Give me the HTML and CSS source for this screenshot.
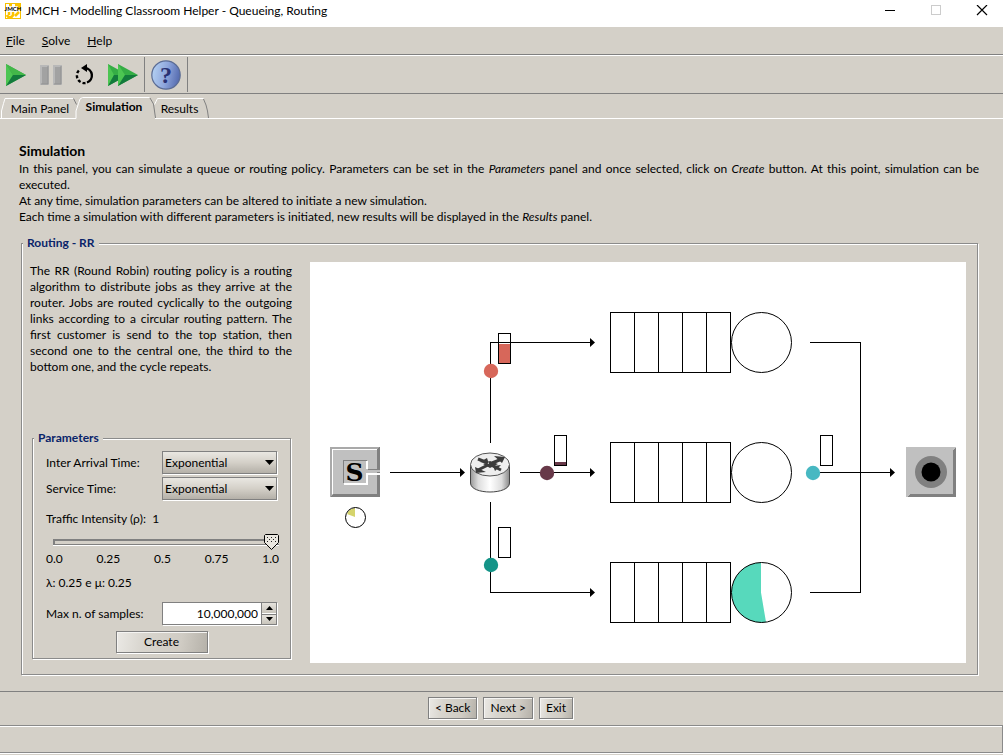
FILE: index.html
```html
<!DOCTYPE html>
<html lang="en">
<head>
<meta charset="utf-8">
<title>JMCH - Modelling Classroom Helper - Queueing, Routing</title>
<link rel="stylesheet" href="styles.css">
</head>
<body>
<header class="titlebar">
  <svg class="app-icon" width="16" height="16" viewBox="0 0 16 16" aria-hidden="true">
    <rect x="0.500" y="0.500" width="15" height="15" fill="#fff" stroke="#f5c000"/>
    <path d="M4 2h3M10 2h4v5M2 12c1 3 5 3 6 0V9M10 13l4-4M4 9v3" fill="none" stroke="#fdc400" stroke-width="2.500"/>
    <text x="8" y="8" text-anchor="middle" class="app-icon-text">JMCH</text>
  </svg>
  <span class="title">JMCH - Modelling Classroom Helper - Queueing, Routing</span>
  <div class="window-buttons">
    <button type="button" aria-label="Minimize"><svg width="12" height="12" viewBox="0 0 12 12"><path d="M1 5.500h10" stroke="#000"/></svg></button>
    <button type="button" aria-label="Maximize" disabled><svg width="12" height="12" viewBox="0 0 12 12"><rect x="1.500" y="0.500" width="9" height="9" fill="none" stroke="#ccc"/></svg></button>
    <button type="button" aria-label="Close"><svg width="12" height="12" viewBox="0 0 12 12"><path d="M1 0l10 10M11 0L1 10" stroke="#000" stroke-width="1.200"/></svg></button>
  </div>
</header>

<nav class="menubar" aria-label="Menu">
  <button type="button"><u>F</u>ile</button>
  <button type="button"><u>S</u>olve</button>
  <button type="button"><u>H</u>elp</button>
</nav>

<div class="toolbar" role="toolbar" aria-label="Simulation controls">
  <button type="button" aria-label="Start">
    <svg width="20" height="24" viewBox="0 0 20 24"><path d="M0 1L20 12L0 23z" fill="#35ad45"/><path d="M0 1L7 12L0 23z" fill="#4cc552"/><path d="M0 1L20 12H7z" fill="#43b749"/><path d="M0 23L20 12H7z" fill="#137a3c"/></svg>
  </button>
  <button type="button" aria-label="Pause" disabled>
    <svg width="22" height="20" viewBox="0 0 22 20"><path d="M0 0h9v20H0zM13 0h9v20h-9z" fill="#b8b8b8"/><path d="M2 2h6v17H2zM15 2h6v17h-6z" fill="#a2a2a2"/><path d="M8 1v18H1M21 1v18h-7" fill="none" stroke="#929292"/></svg>
  </button>
  <button type="button" aria-label="Restart">
    <svg width="20" height="22" viewBox="0 0 20 22"><path d="M10 4A7.500 7.500 0 0 1 12 18.500" fill="none" stroke="#000" stroke-width="2.400"/><path d="M10.500 19A7.500 7.500 0 0 1 5 5.500" fill="none" stroke="#000" stroke-width="2.400" stroke-dasharray="3 2"/><path d="M12 0v8L6 4z"/></svg>
  </button>
  <button type="button" aria-label="Fast forward">
    <svg width="30" height="24" viewBox="0 0 30 24"><path d="M0 1L20 12L0 23z" fill="#35ad45"/><path d="M0 1L6 12L0 23z" fill="#4cc552"/><path d="M0 23L20 12H6z" fill="#137a3c"/><path d="M10 1L30 12L10 23z" fill="#35ad45"/><path d="M10 1L17 12L10 23z" fill="#4cc552"/><path d="M10 23L30 12H17z" fill="#137a3c"/></svg>
  </button>
  <span class="tool-separator"></span>
  <button type="button" aria-label="Help">
    <svg width="30" height="30" viewBox="0 0 30 30">
      <defs><linearGradient id="helpFill" x1="0" y1="0.400" x2="1" y2="0.600"><stop offset="0" stop-color="#b3d0f2"/><stop offset="0.500" stop-color="#8ea6dc"/><stop offset="1" stop-color="#5268ad"/></linearGradient></defs>
      <circle cx="15" cy="15" r="14.200" fill="url(#helpFill)" stroke="#5b6c94" stroke-width="1.200"/>
      <text x="15" y="23" text-anchor="middle" class="help-mark">?</text>
    </svg>
  </button>
  <span class="tool-separator"></span>
</div>

<div class="tabs" role="tablist">
  <svg class="tab-edges" width="212" height="25" viewBox="0 0 212 25" aria-hidden="true">
    <g fill="none" stroke-width="1">
      <path d="M1.500 24V17L3.500 9.500L5 4.500H73.500" stroke="#fff"/>
      <path d="M73.500 4.500L76.500 10.500" stroke="#808080"/>
      <path d="M76 24.500V17L78.500 9.500L80 5L82.500 3.500H149.500" stroke="#fff"/>
      <path d="M150 4L153.500 10L154.500 17L155.500 24" stroke="#808080"/>
      <path d="M154.500 10.500L157.500 4.500H203.500" stroke="#fff"/>
      <path d="M203.500 5L206 11L207.500 17L208.500 24" stroke="#808080"/>
    </g>
  </svg>
  <button type="button" role="tab" class="tab tab-main">Main Panel</button>
  <button type="button" role="tab" class="tab tab-current" aria-selected="true">Simulation</button>
  <button type="button" role="tab" class="tab tab-results">Results</button>
  <span class="tab-line"></span>
</div>

<main class="panel">
  <h1>Simulation</h1>
  <div class="intro">
    <p>In this panel, you can simulate a queue or routing policy. Parameters can be set in the <i>Parameters</i> panel and once selected, click on <i>Create</i> button. At this point, simulation can be executed.</p>
    <p>At any time, simulation parameters can be altered to initiate a new simulation.</p>
    <p>Each time a simulation with different parameters is initiated, new results will be displayed in the <i>Results</i> panel.</p>
  </div>

  <fieldset class="group routing">
    <legend>Routing - RR</legend>
    <div class="routing-body">
      <div class="side">
        <p class="description">The RR (Round Robin) routing policy is a routing algorithm to distribute jobs as they arrive at the router. Jobs are routed cyclically to the outgoing links according to a circular routing pattern. The first customer is send to the top station, then second one to the central one, the third to the bottom one, and the cycle repeats.</p>
        <fieldset class="group params">
          <legend>Parameters</legend>
          <div class="form">
            <label for="arrival">Inter Arrival Time:</label>
            <select id="arrival" class="field"><option>Exponential</option></select>
            <label for="service">Service Time:</label>
            <select id="service" class="field"><option>Exponential</option></select>
          </div>
          <label class="traffic" for="traffic">Traffic Intensity (ρ): &nbsp;1</label>
          <input type="range" id="traffic" class="slider" min="0" max="1" step="0.01" value="1">
          <div class="ticks"><span>0.0</span><span>0.25</span><span>0.5</span><span>0.75</span><span>1.0</span></div>
          <p class="rates">λ: 0.25 e μ: 0.25</p>
          <div class="form">
            <label for="samples">Max n. of samples:</label>
            <div class="spinner field">
              <input type="text" id="samples" value="10,000,000">
              <div class="spin-buttons">
                <button type="button" aria-label="Increase"><svg width="7" height="4" viewBox="0 0 7 4"><path d="M0 4L3.500 0L7 4z"/></svg></button>
                <button type="button" aria-label="Decrease"><svg width="7" height="4" viewBox="0 0 7 4"><path d="M0 0L3.500 4L7 0z"/></svg></button>
              </div>
            </div>
          </div>
          <button type="button" class="btn create">Create</button>
        </fieldset>
      </div>

      <div class="canvas">
        <svg viewBox="310 262 656 401" role="img" aria-label="Round robin routing animation">
          <defs>
            <linearGradient id="bodyFill"><stop offset="0" stop-color="#999"/><stop offset="0.200" stop-color="#ddd"/><stop offset="0.500" stop-color="#fff"/><stop offset="0.800" stop-color="#ddd"/><stop offset="1" stop-color="#888"/></linearGradient>
            <clipPath id="server"><circle cx="761.500" cy="592.500" r="30"/></clipPath>
            <g id="queue">
              <path d="M610.500 312.500h120v60h-120zM634.500 312v60M658.500 312v60M682.500 312v60M706.500 312v60" fill="none" stroke="#000" shape-rendering="crispEdges"/>
              <circle cx="761.500" cy="342.500" r="30" fill="none" stroke="#000"/>
            </g>
          </defs>

          <g fill="none" stroke="#000" shape-rendering="crispEdges">
            <path d="M390 472.500H461M490.500 443V342.500H591M520 472.500H591M490.500 502V592.500H591M810 342.500H860.500V592.500H810M810 472.500H891"/>
          </g>
          <path d="M460 468l5 4.500l-5 4.500zM590 338l5 4.500l-5 4.500zM590 468l5 4.500l-5 4.500zM590 588l5 4.500l-5 4.500zM890 468l5 4.500l-5 4.500z"/>

          <path d="M761 592.500V560H730V625H766.500z" fill="#57d9bc" clip-path="url(#server)"/>
          <use href="#queue"/>
          <use href="#queue" y="130"/>
          <use href="#queue" y="250"/>

          <g shape-rendering="crispEdges">
            <path d="M499 344h11v19h-11z" fill="#d7675a"/>
            <path d="M555 462h11v3h-11z" fill="#683949"/>
            <path d="M498.500 333.500h12v30h-12zM554.500 435.500h12v30h-12zM498.500 527.500h12v30h-12zM820.500 435.500h12v30h-12z" fill="none" stroke="#000"/>
          </g>
          <circle cx="491" cy="371" r="7.200" fill="#d7675a"/>
          <circle cx="547" cy="473" r="7.200" fill="#683949"/>
          <circle cx="491" cy="565" r="7.200" fill="#149488"/>
          <circle cx="813" cy="473" r="7.200" fill="#47b8c2"/>

          <path d="M355 517V508A9.500 9.500 0 0 0 347 514z" fill="#d5d46c"/>
          <circle cx="355.500" cy="517.500" r="10" fill="none" stroke="#000"/>

          <g shape-rendering="crispEdges">
            <path d="M330 447h50v50h-50z" fill="#c0c0c0"/>
            <path d="M330 497v-50h50l-2 2h-46v46z" fill="#a9a9a9"/>
            <path d="M332.500 494v-44.500h46" fill="none" stroke="#fff"/>
            <path d="M330 497l3-3h44v-45l3-2v50z" fill="#808080"/>
            <path d="M343.500 483v-22.500H367" fill="none" stroke="#808080"/>
            <path d="M344 483.500h23v-10h13M367 461v8" fill="none" stroke="#fff" stroke-width="2"/>
            <path d="M366 470h14v2h-14z" fill="#c0c0c0"/>
            <path d="M368 469.500h12" stroke="#808080"/>
          </g>
          <text x="354.500" y="481" text-anchor="middle" class="source-letter">S</text>

          <path d="M470.500 465v18c0 12 39 12 39 0v-18z" fill="url(#bodyFill)" stroke="#444"/>
          <ellipse cx="490" cy="464.500" rx="19.500" ry="11.500" fill="#eee" stroke="#555"/>
          <g fill="none" stroke="#3c3c3c" stroke-width="3">
            <path d="M478 459L488 463M502 459L492 463M478 470L488 465M501 470L491 465"/>
          </g>
          <path d="M494 456l11 1l-3 6zM475 467l1 6l10-1zM483 464l7-3l8 3l-8 4zM480 462l9 2l-2-6zM493 466l8-1l-6 6z" fill="#3c3c3c"/>

          <g shape-rendering="crispEdges">
            <path d="M906 447h50v50h-50z" fill="#c0c0c0"/>
            <path d="M908 497l2-3h43v-44l3-2v49z" fill="#808080"/>
          </g>
          <circle cx="931" cy="472" r="16" fill="#808080"/>
          <circle cx="931" cy="472" r="9.500"/>
        </svg>
      </div>
    </div>
  </fieldset>
</main>

<div class="wizard">
  <button type="button" class="btn">&lt; Back</button>
  <button type="button" class="btn">Next &gt;</button>
  <button type="button" class="btn">Exit</button>
</div>
<footer class="status"></footer>
</body>
</html>
```
FILE: styles.css
```css
* { box-sizing: border-box; }

body {
  margin: 0;
  min-height: 100vh;
  display: flex;
  flex-direction: column;
  background: #d4d0c8;
  color: #000;
  font: 12px/16px Lato, "Noto Sans", sans-serif;
}

button, input, select { font: inherit; color: inherit; }
button { margin: 0; padding: 0; border: 0; background: none; }
svg { display: block; }
p, h1 { margin: 0; }

.titlebar {
  display: flex;
  align-items: center;
  gap: 5px;
  height: 27px;
  padding: 0 6px 5px 5px;
  background: #fff;
}
.app-icon { overflow: visible; }
.app-icon-text { font: bold 6px Lato, sans-serif; }
.title { flex: 1; }
.window-buttons { display: flex; gap: 16px; }
.window-buttons button { width: 30px; display: grid; place-items: center; }

.menubar {
  display: flex;
  gap: 17px;
  height: 28px;
  padding: 0 6px;
  border-bottom: 1px solid #808080;
}

.toolbar {
  display: flex;
  align-items: center;
  gap: 14px;
  height: 39px;
  padding: 0 6px;
  border-top: 1px solid #fff;
  border-bottom: 1px solid #808080;
}
.tool-separator { width: 1px; height: 35px; background: #808080; margin: 0 -8px; }
.toolbar button:nth-of-type(3) { margin: 0 -1px; }

.tabs {
  position: relative;
  display: flex;
  height: 25px;
}
.tab-edges { position: absolute; left: 0; top: 0; }
.tab { position: relative; padding-top: 6px; text-align: center; }
.tab-main { width: 76px; padding-left: 4px; border-bottom: 1px solid #fff; }
.tab-current { width: 79px; padding: 2px 3px 2px 0; font-weight: bold; }
.tab-results { width: 53px; padding-right: 4px; border-bottom: 1px solid #fff; }
.tab-line { flex: 1; border-bottom: 1px solid #fff; }

.panel {
  flex: 1;
  padding: 24px 24px 15px 18px;
}
h1 { font-size: 14px; line-height: 16px; padding: 0 1px 2px; }
.intro { padding-left: 1px; text-align: justify; }

.group {
  min-width: 0;
  border: 1px solid #8b8b8b;
  box-shadow: 1px 1px #fff, inset 1px 1px #fff;
}
legend {
  padding: 0 4px;
  background: #d4d0c8;
  color: #0a246a;
  font-weight: bold;
}

.routing { margin: 10px 1px 1px 3px; padding: 11px 11px 11px 0; }
.routing > legend { margin-left: 1px; }
.routing-body { display: flex; gap: 18px; }
.side {
  display: flex;
  flex-direction: column;
  width: 270px;
  padding-left: 8px;
}
.description { flex: 1; text-align: justify; padding: 1px 0 20px; }

.params {
  margin: 0 1px 4px 2px;
  padding: 5px 13px;
}
.params > legend { margin-left: -12px; }

.form {
  display: grid;
  grid-template-columns: 1fr 115px;
  gap: 3px 0;
  align-items: center;
}
.field {
  height: 23px;
  border: 1px solid #808080;
  box-shadow: 1px 1px #fff;
}
select.field {
  appearance: none;
  border-radius: 0;
  padding: 0 2px;
  background:
    url("data:image/svg+xml,%3Csvg xmlns='http://www.w3.org/2000/svg' width='9' height='5'%3E%3Cpath d='M0 0h9L4.500 5z'/%3E%3C/svg%3E") right 2px center no-repeat,
    linear-gradient(#e9e7e2, #d4d0c8 50%, #b4b0a8);
}
.traffic { display: block; margin-top: 11px; }

.slider {
  appearance: none;
  display: block;
  width: calc(100% + 2px);
  height: 16px;
  margin: 7px 0 0;
  padding-left: 7px;
  background: none;
}
.slider::-webkit-slider-runnable-track {
  height: 6px;
  border: 1px solid #808080;
  border-width: 2px 0 1px 2px;
  box-shadow: 0 1px #fff;
}
.slider::-webkit-slider-thumb {
  appearance: none;
  width: 15px;
  height: 16px;
  margin-top: -7px;
  background: url("data:image/svg+xml,%3Csvg xmlns='http://www.w3.org/2000/svg' width='15' height='16'%3E%3Cpath d='M1.500 .5h12l1 1v7L7.500 15.500L.5 8.500v-7z' fill='%23e9e6df' stroke='%23000'/%3E%3Cpath d='M3 3.500h10M3 7.500h10M5 5.500h8' stroke='%23222' stroke-dasharray='1 3'/%3E%3C/svg%3E") no-repeat;
}
.ticks { display: flex; justify-content: space-between; margin: 1px -2px 0 0; }
.rates { margin: 8px 0 11px; }

.spinner { display: flex; background: #fff; }
.spinner input {
  flex: 1;
  min-width: 0;
  border: 0;
  padding: 0 3px;
  background: none;
  text-align: right;
}
.spin-buttons {
  display: flex;
  flex-direction: column;
  gap: 1px;
  width: 15px;
  border-left: 1px solid #808080;
}
.spin-buttons button {
  flex: 1;
  display: grid;
  place-items: center;
  background: linear-gradient(#e6e3dd, #c8c4bb);
}
.spin-buttons button + button { border-top: 1px solid #808080; }

.btn {
  height: 22px;
  padding: 0 6px;
  border: 1px solid #808080;
  background: linear-gradient(100deg, #ebe9e5, #d8d5ce 30%, #d0ccc4 70%, #b5b1a9);
  box-shadow: 1px 1px #fff, inset 1px 1px #f5f4f2;
}
.create { display: block; width: 92px; margin: 6px auto 0; }

.canvas { flex: 1; min-width: 0; background: #fff; }
.canvas svg { width: 100%; height: auto; }
.source-letter { font: bold 25px "DejaVu Serif", serif; }
.help-mark { font: bold 24px "Liberation Serif", serif; fill: #283173; }

.wizard {
  display: flex;
  justify-content: center;
  gap: 6px;
  padding: 5px 2px 6px 0;
  border-top: 1px solid #808080;
}
.status {
  height: 28px;
  margin-bottom: 2px;
  border: 1px solid #8a8a8a;
  border-left: 0;
  box-shadow: inset 0 1px #fff, 0 1px #fff;
}
```
